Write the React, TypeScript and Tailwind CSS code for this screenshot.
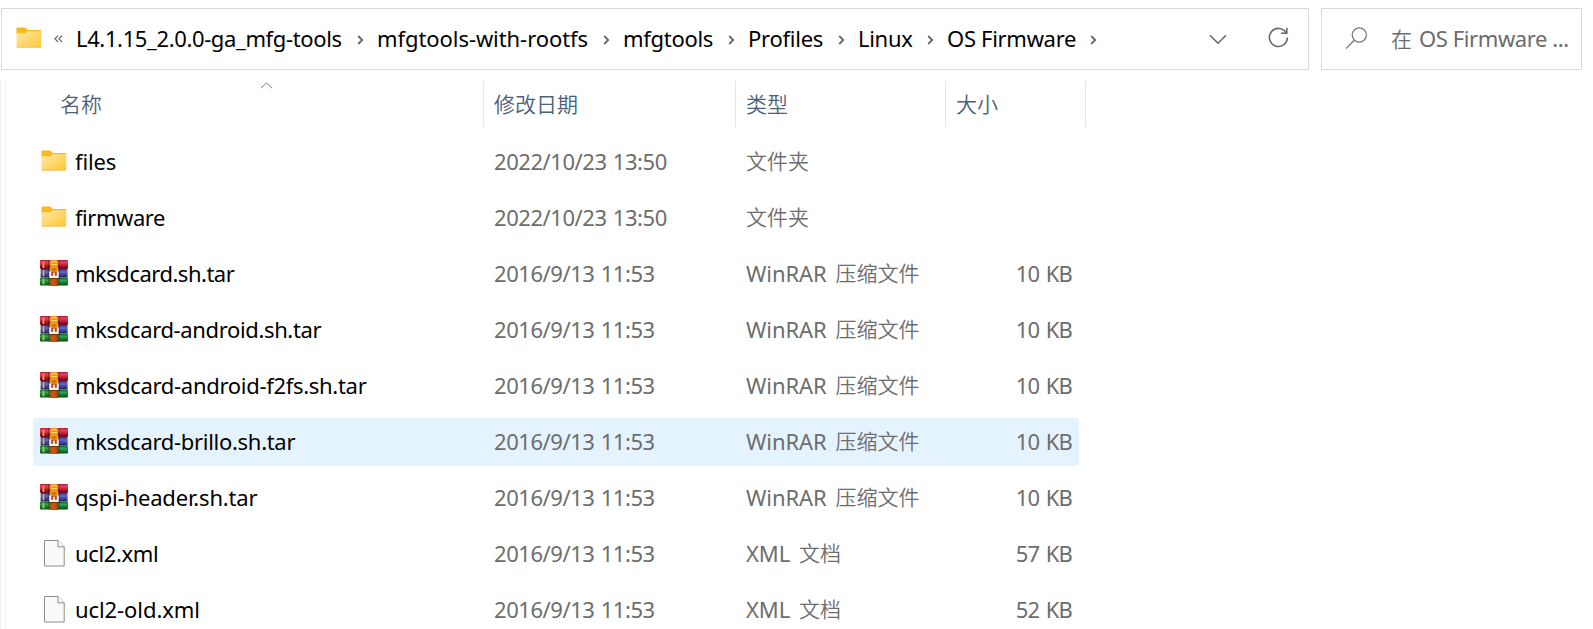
import type { ReactNode } from "react";

type Kind = "folder" | "rar" | "file";

interface Entry {
  kind: Kind;
  name: string;
  track: string;
  date: string;
  type: [string, string];
  size?: string;
  active?: boolean;
}

const entries: Entry[] = [
  { kind: "folder", name: "files", track: "tracking-[-0.15px]", date: "2022/10/23 13:50", type: ["", "文件夹"] },
  { kind: "folder", name: "firmware", track: "tracking-[-0.45px]", date: "2022/10/23 13:50", type: ["", "文件夹"] },
  { kind: "rar", name: "mksdcard.sh.tar", track: "tracking-[-0.5px]", date: "2016/9/13 11:53", type: ["WinRAR", "压缩文件"], size: "10 KB" },
  { kind: "rar", name: "mksdcard-android.sh.tar", track: "tracking-[-0.36px]", date: "2016/9/13 11:53", type: ["WinRAR", "压缩文件"], size: "10 KB" },
  { kind: "rar", name: "mksdcard-android-f2fs.sh.tar", track: "tracking-[-0.3px]", date: "2016/9/13 11:53", type: ["WinRAR", "压缩文件"], size: "10 KB" },
  { kind: "rar", name: "mksdcard-brillo.sh.tar", track: "tracking-[-0.3px]", date: "2016/9/13 11:53", type: ["WinRAR", "压缩文件"], size: "10 KB", active: true },
  { kind: "rar", name: "qspi-header.sh.tar", track: "tracking-[-0.17px]", date: "2016/9/13 11:53", type: ["WinRAR", "压缩文件"], size: "10 KB" },
  { kind: "file", name: "ucl2.xml", track: "tracking-[-0.35px]", date: "2016/9/13 11:53", type: ["XML", "文档"], size: "57 KB" },
  { kind: "file", name: "ucl2-old.xml", track: "tracking-[-0.08px]", date: "2016/9/13 11:53", type: ["XML", "文档"], size: "52 KB" },
];

const crumbs = [
  { label: "L4.1.15_2.0.0-ga_mfg-tools", width: "w-[301px]", track: "tracking-[-0.37px]" },
  { label: "mfgtools-with-rootfs", width: "w-[246px]", track: "tracking-[-0.07px]" },
  { label: "mfgtools", width: "w-[125px]", track: "tracking-[-0.3px]" },
  { label: "Profiles", width: "w-[110px]", track: "tracking-[-0.25px]" },
  { label: "Linux", width: "w-[89px]", track: "tracking-[-0.3px]" },
  { label: "OS Firmware", width: "w-[163px]", track: "tracking-[-0.3px]" },
];

function FolderIcon() {
  return (
    <svg width="26" height="21" viewBox="0 0 26 21" className="shrink-0">
      <defs>
        <linearGradient id="folder" x1="0" y1="0" x2="1" y2="1">
          <stop offset="0" stopColor="#ffe9a6" />
          <stop offset="1" stopColor="#fdc736" />
        </linearGradient>
      </defs>
      <path d="M0.5 1.7Q0.5.5 1.7.5H8.6Q9.4.5 10 1.1L12 3H24.2Q25.2 3 25.2 4V8H.5Z" fill="#f9b81c" />
      <path d="M.5 6.2H8.5Q9.6 6.2 10.3 5.5L11.6 4.2H25.2V19.2Q25.2 20.3 24.2 20.3H1.6Q.5 20.3 .5 19.2Z" fill="url(#folder)" />
      <path d="M.9 20.2H24.9" stroke="#e9b84a" strokeWidth=".8" />
    </svg>
  );
}

function RarIcon() {
  return (
    <svg width="28" height="26" viewBox="0 0 28 26" className="shrink-0">
      <defs>
        <linearGradient id="red" x1="0" y1="0" x2="0" y2="1">
          <stop offset="0" stopColor="#b3203c" />
          <stop offset=".3" stopColor="#e2405e" />
          <stop offset=".65" stopColor="#b31532" />
          <stop offset="1" stopColor="#5d0a1a" />
        </linearGradient>
        <linearGradient id="blue" x1="0" y1="0" x2="0" y2="1">
          <stop offset="0" stopColor="#34348c" />
          <stop offset=".35" stopColor="#6464c8" />
          <stop offset=".7" stopColor="#3d3d9c" />
          <stop offset="1" stopColor="#1d1d55" />
        </linearGradient>
        <linearGradient id="green" x1="0" y1="0" x2="0" y2="1">
          <stop offset="0" stopColor="#0f5c2a" />
          <stop offset=".35" stopColor="#2ba253" />
          <stop offset=".7" stopColor="#0e7a34" />
          <stop offset="1" stopColor="#07401b" />
        </linearGradient>
        <linearGradient id="strap" x1="0" y1="0" x2="1" y2="0">
          <stop offset="0" stopColor="#a8480f" />
          <stop offset=".5" stopColor="#c95a18" />
          <stop offset="1" stopColor="#8f3a0a" />
        </linearGradient>
      </defs>
      <rect x="0" y="0" width="28" height="9" rx="1" fill="url(#red)" />
      <rect x="0.6" y="9" width="27" height="8.5" rx=".8" fill="url(#blue)" />
      <rect x="0" y="17.5" width="28" height="8" rx="1" fill="url(#green)" />
      <path d="M3.5 1.5V8M3.5 10V16.5M3.5 18.5V24.5" stroke="#f0b429" strokeWidth="1.6" />
      <path d="M8.8 .5V25M19.2 .5V25" stroke="#000" strokeOpacity=".3" strokeWidth="1.2" />
      <rect x="9.5" y="16" width="9" height="10" fill="url(#strap)" />
      <path d="M9.7 2Q9.7 0 12 0H16Q18.3 0 18.3 2V5L17.3 6L18.3 7.5V12H9.7V7.5L10.7 6L9.7 5Z" fill="#ee951f" />
      <path d="M11.2 1.6H16.8M11.2 4.6H16.8" stroke="#ffd552" strokeWidth="1.2" />
      <path d="M12.6 8.8H15.4V10H12.6Z" fill="#8a4308" />
      <path d="M9.2 12.5Q9.2 11.3 10.4 11.3H17.6Q18.8 11.3 18.8 12.5V17Q18.8 18 17.8 18H10.2Q9.2 18 9.2 17Z" fill="#f2eeea" />
      <path d="M11.2 11.3H16.8V15.8H11.2Z" fill="#b5440f" />
      <path d="M13.2 12.6H14.8V16.5H13.2Z" fill="#fff" />
      <path d="M9.5 18.5H18.5" stroke="#7a2e08" />
    </svg>
  );
}

function FileIcon() {
  return (
    <svg width="21" height="27" viewBox="0 0 21 27" className="shrink-0">
      <path d="M.5.5H14L20.2 6.8V26H.5Z" fill="#f9f9f9" stroke="#8c8c8c" />
      <path d="M14 .5V6.8H20.2" fill="#fff" stroke="#8c8c8c" />
    </svg>
  );
}

function Separator() {
  return (
    <svg width="7" height="10" viewBox="0 0 7 10" className="mt-[5px] shrink-0">
      <path d="M1.2 1L5.2 5L1.2 9" fill="none" stroke="#666" strokeWidth="1.8" />
    </svg>
  );
}

function Han({ children, className = "" }: { children: ReactNode; className?: string }) {
  return (
    <span className={`pb-[2px] font-['Noto_Sans_CJK_SC',sans-serif] text-[21px] font-[350] tracking-normal ${className}`}>
      {children}
    </span>
  );
}

function AddressBar() {
  return (
    <div className="flex h-[62px] w-[1308px] items-center border border-[#d9d9d9] pl-[14px]">
      <div className="pb-[3px]">
        <FolderIcon />
      </div>
      <svg width="9" height="8" viewBox="0 0 9 8" className="ml-[12px] shrink-0">
        <path d="M4 .7L1 3.8L4 7M8 .7L5 3.8L8 7" fill="none" stroke="#666" strokeWidth="1.2" />
      </svg>
      <div className="ml-[13px] flex items-center pb-[3px] text-black">
        {crumbs.map((c) => (
          <div key={c.label} className={`flex items-center justify-between pr-[13px] whitespace-nowrap ${c.width}`}>
            <span className={c.track}>{c.label}</span>
            <Separator />
          </div>
        ))}
      </div>
      <svg width="18" height="11" viewBox="0 0 18 11" className="ml-[99px] shrink-0">
        <path d="M1 1.2L9 9.2L17 1.2" fill="none" stroke="#666" strokeWidth="1.5" />
      </svg>
      <svg width="21" height="21" viewBox="0 0 21 21" className="mb-[3px] ml-[41px] shrink-0">
        <path d="M18 5.6A9 9 0 1 0 19.4 10.5M18.8 .8V6.2H13" fill="none" stroke="#666" strokeWidth="1.6" />
      </svg>
    </div>
  );
}

function SearchBox() {
  return (
    <div className="flex h-[62px] w-[261px] items-center border border-[#d9d9d9] pl-[23px] whitespace-nowrap text-[#6b6b6b]">
      <svg width="23" height="23" viewBox="0 0 23 23" className="mb-[2px] shrink-0">
        <circle cx="14.3" cy="8" r="7.1" fill="none" stroke="#777" strokeWidth="1.2" />
        <path d="M9.2 13.2L1 21.6" stroke="#777" strokeWidth="1.3" />
      </svg>
      <Han className="ml-[23px]">在</Han>
      <span className="ml-[7px] pb-[2px] tracking-[-0.4px]">OS Firmware ...</span>
    </div>
  );
}

function ColumnHeader() {
  return (
    <div className="flex h-[46px] shrink-0 items-center text-[#4c607a]">
      <div className="relative flex h-full w-[478px] items-center border-r border-[#e5e5e5] pl-[54px]">
        <Han>名称</Han>
        <svg width="13" height="7" viewBox="0 0 13 7" className="absolute top-[1px] left-[254px]">
          <path d="M1 6.2L6.5 .9L12 6.2" fill="none" stroke="#777" />
        </svg>
      </div>
      <div className="flex h-full w-[252px] items-center border-r border-[#e5e5e5] pl-[10px]">
        <Han>修改日期</Han>
      </div>
      <div className="flex h-full w-[210px] items-center border-r border-[#e5e5e5] pl-[10px]">
        <Han>类型</Han>
      </div>
      <div className="flex h-full w-[140px] items-center border-r border-[#e5e5e5] pl-[10px]">
        <Han>大小</Han>
      </div>
    </div>
  );
}

function Row({ entry }: { entry: Entry }) {
  const [latin, han] = entry.type;
  return (
    <div
      className={`flex h-12 w-[1046px] shrink-0 items-center rounded-[2px] pb-[2px] whitespace-nowrap text-[#6d6d6d] ${entry.active ? "bg-[#e5f3ff]" : ""}`}
    >
      <div className={`flex w-[42px] shrink-0 justify-center ${entry.kind === "folder" ? "pb-[2px]" : ""}`}>
        {entry.kind === "folder" && <FolderIcon />}
        {entry.kind === "rar" && <RarIcon />}
        {entry.kind === "file" && <FileIcon />}
      </div>
      <div className={`w-[419px] shrink-0 text-black ${entry.track}`}>{entry.name}</div>
      <div className="w-[252px] shrink-0 tracking-[-0.45px] [word-spacing:1px]">{entry.date}</div>
      <div className="flex w-[210px] shrink-0 items-center gap-[9px]">
        {latin && <span className="tracking-[-0.1px]">{latin}</span>}
        <Han>{han}</Han>
      </div>
      <div className="grow pr-[7px] text-right tracking-[-0.8px] [word-spacing:1.5px]">{entry.size}</div>
    </div>
  );
}

export default function App() {
  return (
    <div className="h-[629px] w-[1593px] overflow-hidden bg-white font-['Noto_Sans','Noto_Sans_CJK_SC',sans-serif] text-[22px] leading-[30px]">
      <div className="flex gap-[12px] pt-[8px] pl-[1px]">
        <AddressBar />
        <SearchBox />
      </div>
      <div className="mt-[11px] flex h-[548px]">
        <div className="h-full w-[6px] shrink-0 border-x border-[#f0f0f0]" />
        <div className="flex flex-col">
          <ColumnHeader />
          <div className="mt-[11px] ml-[27px] flex flex-col gap-2">
            {entries.map((e) => (
              <Row key={e.name} entry={e} />
            ))}
          </div>
        </div>
      </div>
    </div>
  );
}
